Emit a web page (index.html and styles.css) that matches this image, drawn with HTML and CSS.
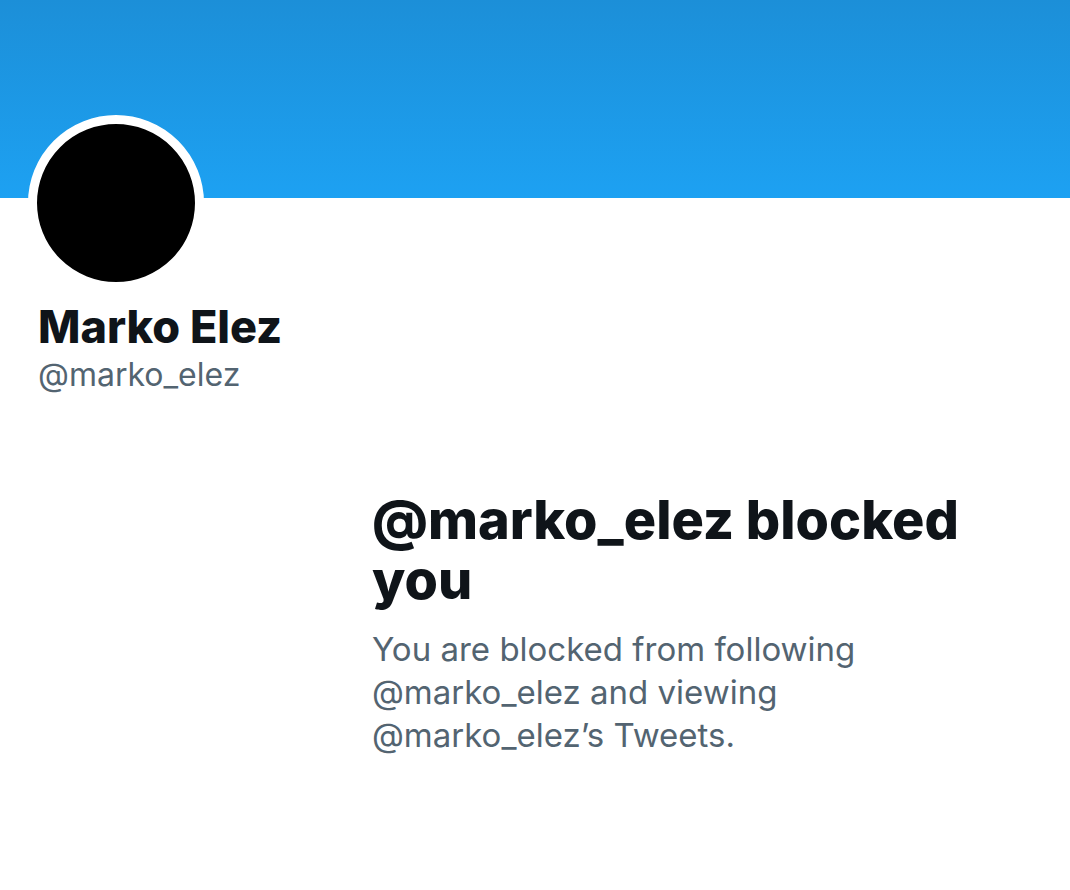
FILE: index.html
```html
<!DOCTYPE html>
<html lang="en">
<head>
  <meta charset="UTF-8">
  <meta name="viewport" content="width=device-width, initial-scale=1.0">
  <title>@marko_elez blocked you</title>
  <link rel="stylesheet" href="styles.css">
</head>
<body>
  <div class="banner"></div>

  <section class="profile">
    <div class="avatar"></div>
    <h1 class="profile-name">Marko Elez</h1>
    <div class="profile-handle">@marko_elez</div>
  </section>

  <section class="empty-state">
    <h2 class="empty-title">@marko_elez blocked you</h2>
    <p class="empty-text">You are blocked from following @marko_elez and viewing @marko_elez’s Tweets.</p>
  </section>
</body>
</html>
```

FILE: styles.css
```css
:root {
  --blue-top: #1c8fd8;
  --blue-bottom: #1da1f2;
  --text: #0f1419;
  --muted: #536471;
}

* {
  margin: 0;
  padding: 0;
  box-sizing: border-box;
}

body {
  font-family: Inter, 'Liberation Sans', sans-serif;
  background: #ffffff;
  color: var(--text);
}

.banner {
  height: 198px;
  background: linear-gradient(to bottom, var(--blue-top), var(--blue-bottom));
}

.profile {
  padding-left: 28px;
}

.avatar {
  width: 176px;
  height: 176px;
  margin-top: -83px;
  border-radius: 50%;
  background: #000000;
  border: 9px solid #ffffff;
}

.profile-name {
  margin-top: 8px;
  margin-left: 10px;
  font-size: 45px;
  font-weight: 800;
  line-height: 56px;
}

.profile-handle {
  margin-left: 10px;
  font-size: 32px;
  line-height: 40px;
  color: var(--muted);
}

.empty-state {
  width: 620px;
  margin: 95px 0 0 372px;
}

.empty-title {
  font-size: 54px;
  font-weight: 800;
  line-height: 60px;
}

.empty-text {
  margin-top: 18px;
  font-size: 33px;
  line-height: 43px;
  color: var(--muted);
}
```
